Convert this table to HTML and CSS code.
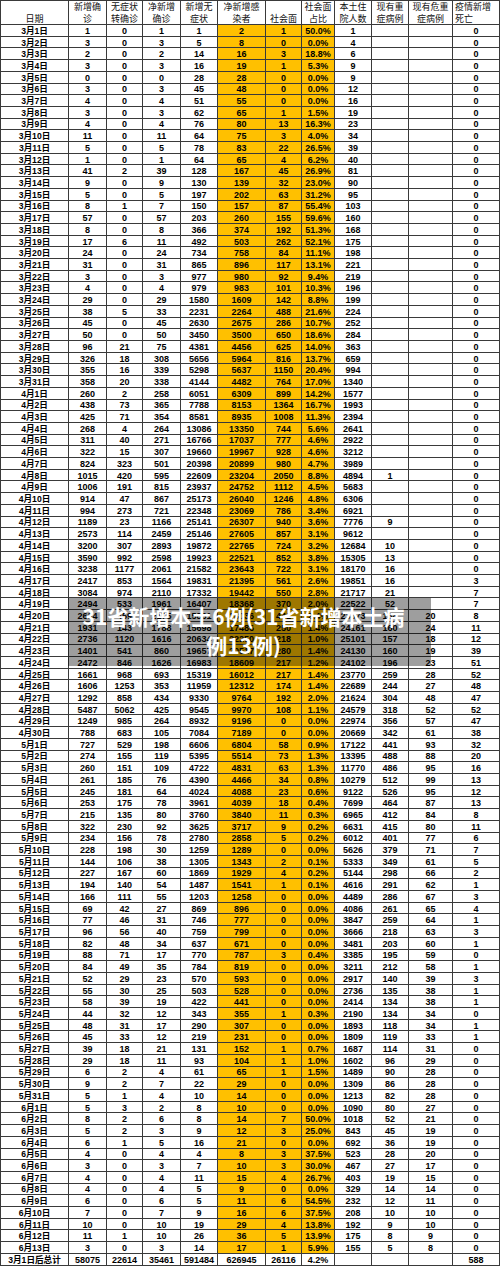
FILE: index.html
```html
<!DOCTYPE html>
<html lang="zh-CN">
<head>
<meta charset="utf-8">
<title>上海疫情数据表</title>
<link rel="stylesheet" href="styles.css">
</head>
<body>
<div class="sheet">
  <div class="grid" id="grid">
    <div class="h">日期</div>
    <div class="h">新增确<br>诊</div>
    <div class="h">无症状<br>转确诊</div>
    <div class="h">净新增<br>确诊</div>
    <div class="h">新增无<br>症状</div>
    <div class="h">净新增感<br>染者</div>
    <div class="h">社会面</div>
    <div class="h">社会面<br>占比</div>
    <div class="h">本土住<br>院人数</div>
    <div class="h">现有重<br>症病例</div>
    <div class="h">现有危重<br>症病例</div>
    <div class="h h-left">疫情新增<br>死亡</div>
  </div>
  <div class="overlay">31省新增本土6例(31省新增本土病例13例)</div>
</div>
<script src="script.js"></script>
</body>
</html>
```

FILE: styles.css
```css
html, body {
  margin: 0;
  padding: 0;
  background: #ffffff;
}

.sheet {
  position: relative;
  width: 500px;
  height: 1267px;
  overflow: hidden;
}

.grid {
  display: grid;
  grid-template-columns: 68px 38px 36px 38px 37px 48px 36px 33px 37px 37px 44px 47px;
  grid-template-rows: 24px;
  grid-auto-rows: 11.717px;
  border-left: 1px solid #3a3a3a;
  border-top: 1px solid #3a3a3a;
  width: 499px;
}

.h,
.c {
  box-sizing: border-box;
  border-right: 1px solid #3a3a3a;
  border-bottom: 1px solid #3a3a3a;
  overflow: hidden;
  white-space: nowrap;
}

.h {
  display: flex;
  flex-direction: column;
  justify-content: flex-end;
  align-items: center;
  text-align: center;
  font-family: "Noto Sans CJK SC", sans-serif;
  font-weight: 400;
  font-size: 9px;
  line-height: 11.4px;
  color: #111;
  padding-bottom: 0;
}

.h-left {
  align-items: flex-start;
  text-align: left;
  padding-left: 2px;
}

.c {
  display: flex;
  align-items: center;
  justify-content: center;
  padding-top: 1px;
  font-family: "Liberation Sans", "Noto Sans CJK SC", sans-serif;
  font-weight: 700;
  font-size: 9px;
  line-height: 10px;
  color: #000;
}

.dt {
  font-size: 8.6px;
}

.y {
  background: #ffc000;
}

.overlay {
  position: absolute;
  left: 68px;
  top: 598px;
  width: 363px;
  height: 68px;
  box-sizing: border-box;
  padding: 4px 20px 0 8px;
  background: rgba(0, 0, 0, 0.38);
  color: #ffffff;
  font-family: "Noto Sans CJK SC", sans-serif;
  font-weight: 700;
  font-size: 21px;
  line-height: 28.5px;
  text-align: center;
}
```

FILE: script.js
```js
(function () {
  var data = [
    "1,0,1,1,2,1,50.0%,1,,,0",
    "3,0,3,5,8,0,0.0%,4,,,0",
    "2,0,2,14,16,3,18.8%,6,,,0",
    "3,0,3,16,19,1,5.3%,9,,,0",
    "0,0,0,28,28,0,0.0%,9,,,0",
    "3,0,3,45,48,0,0.0%,12,,,0",
    "4,0,4,51,55,0,0.0%,16,,,0",
    "3,0,3,62,65,1,1.5%,19,,,0",
    "4,0,4,76,80,13,16.3%,23,,,0",
    "11,0,11,64,75,3,4.0%,34,,,0",
    "5,0,5,78,83,22,26.5%,39,,,0",
    "1,0,1,64,65,4,6.2%,40,,,0",
    "41,2,39,128,167,45,26.9%,81,,,0",
    "9,0,9,130,139,32,23.0%,90,,,0",
    "5,0,5,197,202,63,31.2%,95,,,0",
    "8,1,7,150,157,87,55.4%,103,,,0",
    "57,0,57,203,260,155,59.6%,160,,,0",
    "8,0,8,366,374,192,51.3%,168,,,0",
    "17,6,11,492,503,262,52.1%,175,,,0",
    "24,0,24,734,758,84,11.1%,198,,,0",
    "31,0,31,865,896,117,13.1%,221,,,0",
    "3,0,3,977,980,92,9.4%,219,,,0",
    "4,0,4,979,983,101,10.3%,196,,,0",
    "29,0,29,1580,1609,142,8.8%,199,,,0",
    "38,5,33,2231,2264,488,21.6%,224,,,0",
    "45,0,45,2630,2675,286,10.7%,252,,,0",
    "50,0,50,3450,3500,650,18.6%,284,,,0",
    "96,21,75,4381,4456,625,14.0%,363,,,0",
    "326,18,308,5656,5964,816,13.7%,659,,,0",
    "355,16,339,5298,5637,1150,20.4%,994,,,0",
    "358,20,338,4144,4482,764,17.0%,1340,,,0",
    "260,2,258,6051,6309,899,14.2%,1577,,,0",
    "438,73,365,7788,8153,1364,16.7%,1993,,,0",
    "425,71,354,8581,8935,1008,11.3%,2394,,,0",
    "268,4,264,13086,13350,744,5.6%,2641,,,0",
    "311,40,271,16766,17037,777,4.6%,2922,,,0",
    "322,15,307,19660,19967,928,4.6%,3212,,,0",
    "824,323,501,20398,20899,980,4.7%,3989,,,0",
    "1015,420,595,22609,23204,2050,8.8%,4894,1,,0",
    "1006,191,815,23937,24752,1112,4.5%,5683,,,0",
    "914,47,867,25173,26040,1246,4.8%,6306,,,0",
    "994,273,721,22348,23069,786,3.4%,6921,,,0",
    "1189,23,1166,25141,26307,940,3.6%,7776,9,,0",
    "2573,114,2459,25146,27605,857,3.1%,9612,,,0",
    "3200,307,2893,19872,22765,724,3.2%,12684,10,,0",
    "3590,992,2598,19923,22521,852,3.8%,15305,13,,0",
    "3238,1177,2061,21582,23643,722,3.1%,18170,16,,0",
    "2417,853,1564,19831,21395,561,2.6%,19851,16,,3",
    "3084,974,2110,17332,19442,550,2.8%,21717,21,,7",
    "2494,533,1961,16407,18368,370,2.0%,22522,52,,7",
    "2634,459,2175,15861,18036,441,2.4%,23373,138,20,8",
    "1931,143,1788,15698,17486,250,1.4%,24161,160,24,11",
    "2736,1120,1616,20634,22250,218,1.0%,25101,157,18,12",
    "1401,541,860,19657,20517,280,1.4%,24130,160,19,39",
    "2472,846,1626,16983,18609,217,1.2%,24102,196,23,51",
    "1661,968,693,15319,16012,217,1.4%,23770,259,28,52",
    "1606,1253,353,11959,12312,174,1.4%,22689,244,27,48",
    "1292,858,434,9330,9764,192,2.0%,21624,304,48,47",
    "5487,5062,425,9545,9970,108,1.1%,24579,318,52,52",
    "1249,985,264,8932,9196,0,0.0%,22974,356,57,47",
    "788,683,105,7084,7189,0,0.0%,20669,342,61,38",
    "727,529,198,6606,6804,58,0.9%,17122,441,93,32",
    "274,155,119,5395,5514,73,1.3%,13395,488,88,20",
    "260,151,109,4722,4831,63,1.3%,11770,486,95,16",
    "261,185,76,4390,4466,34,0.8%,10279,512,99,13",
    "245,181,64,4024,4088,23,0.6%,9122,526,95,12",
    "253,175,78,3961,4039,18,0.4%,7699,464,87,13",
    "215,135,80,3760,3840,11,0.3%,6965,412,84,8",
    "322,230,92,3625,3717,9,0.2%,6631,415,80,11",
    "234,156,78,2780,2858,5,0.2%,6012,401,77,6",
    "228,198,30,1259,1289,0,0.0%,5626,379,71,7",
    "144,106,38,1305,1343,2,0.1%,5333,349,61,5",
    "227,167,60,1869,1929,4,0.2%,5144,298,66,2",
    "194,140,54,1487,1541,1,0.1%,4616,291,62,1",
    "166,111,55,1203,1258,0,0.0%,4489,286,67,3",
    "69,42,27,869,896,0,0.0%,4086,261,65,4",
    "77,46,31,746,777,0,0.0%,3847,259,64,1",
    "96,56,40,759,799,0,0.0%,3666,218,63,3",
    "82,48,34,637,671,0,0.0%,3481,203,60,1",
    "88,71,17,770,787,3,0.4%,3385,195,59,0",
    "84,49,35,784,819,0,0.0%,3211,212,58,1",
    "52,29,23,570,593,0,0.0%,2917,140,39,3",
    "55,30,25,503,528,0,0.0%,2736,135,38,1",
    "58,39,19,422,441,0,0.0%,2414,134,38,1",
    "44,32,12,343,355,1,0.3%,2190,134,34,0",
    "48,31,17,290,307,0,0.0%,1893,118,34,1",
    "45,33,12,219,231,0,0.0%,1809,119,33,1",
    "39,18,21,131,152,1,0.7%,1687,114,31,0",
    "29,18,11,93,104,1,1.0%,1602,96,29,0",
    "6,2,4,61,65,1,1.5%,1489,90,28,0",
    "9,2,7,22,29,0,0.0%,1309,86,28,0",
    "5,1,4,10,14,0,0.0%,1213,82,28,0",
    "5,3,2,8,10,0,0.0%,1090,80,27,0",
    "8,2,6,8,14,7,50.0%,1018,52,21,0",
    "5,2,3,9,12,3,25.0%,843,45,19,0",
    "6,1,5,16,21,0,0.0%,692,36,19,0",
    "4,0,4,4,8,3,37.5%,523,28,20,0",
    "3,0,3,7,10,3,30.0%,467,27,17,0",
    "4,0,4,11,15,4,26.7%,403,19,15,0",
    "4,0,4,5,9,0,0.0%,329,14,14,0",
    "6,0,6,5,11,6,54.5%,232,12,11,0",
    "7,0,7,9,16,6,37.5%,208,10,10,0",
    "10,0,10,19,29,4,13.8%,192,9,10,0",
    "11,1,10,26,36,5,13.9%,175,8,9,0",
    "3,0,3,14,17,1,5.9%,155,5,8,0"
  ];
  var months = [[3, 31], [4, 30], [5, 31], [6, 13]];
  var dates = [];
  months.forEach(function (m) {
    for (var d = 1; d <= m[1]; d++) dates.push(m[0] + "月" + d + "日");
  });
  var html = "";
  data.forEach(function (row, i) {
    var cells = [dates[i]].concat(row.split(","));
    cells.forEach(function (c, j) {
      var cls = "c" + (j === 0 ? " dt" : "") + (j >= 5 && j <= 7 ? " y" : "");
      html += '<div class="' + cls + '">' + c + "</div>";
    });
  });
  var total = ["3月1日后总计", "58075", "22614", "35461", "591484", "626945", "26116", "4.2%", "", "", "", "588"];
  total.forEach(function (c, j) {
    html += '<div class="c' + (j === 0 ? " dt" : "") + '">' + c + "</div>";
  });
  document.getElementById("grid").insertAdjacentHTML("beforeend", html);
})();
```
